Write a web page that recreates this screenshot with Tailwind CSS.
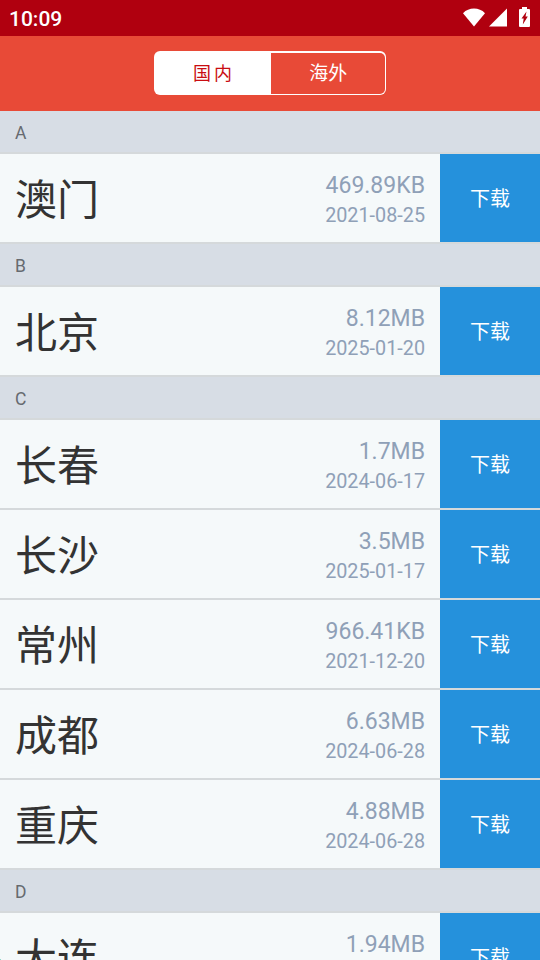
<!DOCTYPE html>
<html lang="zh-CN">
<head>
    <meta charset="UTF-8">
    <meta name="viewport" content="width=device-width, initial-scale=1.0">
    <title>城市下载</title>
    <script src="https://cdn.jsdelivr.net/npm/@tailwindcss/browser@4"></script>
</head>
<body class="relative h-screen overflow-hidden bg-[#f5f9fa] font-['Roboto','Noto_Sans_CJK_SC',sans-serif]">
    <!-- Status bar -->
    <div class="flex h-9 items-center justify-between bg-[#b0000f] pr-[10px] pl-[9px] text-white">
        <span class="pt-[3px] text-[21px] leading-none font-medium">10:09</span>
        <div class="flex items-center pb-[2px]">
            <svg class="h-[19px] w-[22px]" viewBox="0 0 22 19" fill="currentColor">
                <path d="M11 18.6 0 5.2C3 2.2 6.800 .6 11 .6s8 1.600 11 4.600z"/>
            </svg>
            <svg class="ml-1 h-[19px] w-[18px]" viewBox="0 0 18 19" fill="currentColor">
                <path d="M18 .6v18H0z"/>
            </svg>
            <svg class="ml-3 h-[20px] w-[11px]" viewBox="0 0 11 20">
                <path fill="currentColor" d="M3 0h5v2h2q1 0 1 1v16q0 1-1 1H1q-1 0-1-1V3q0-1 1-1h2z"/>
                <path fill="#b0000f" d="M7.500 4.500 2.500 11.500h2.200L3.800 17.500 8.800 9.500H6.500z"/>
            </svg>
        </div>
    </div>
    <!-- Header -->
    <header class="flex h-[75px] items-start justify-center bg-[#e84a37] pt-[15px]">
        <div class="flex h-11 w-[232px] overflow-hidden rounded-md bg-white text-[19px]">
            <button class="flex w-[117px] items-center justify-center pt-px pl-[3px] text-[18px] tracking-[3px] text-[#c90d12]">国内</button>
            <button class="my-[1.5px] mr-[1.5px] flex flex-1 items-center justify-center rounded-r-[5px] bg-[#e84a37] pt-[2px] pl-px text-white">海外</button>
        </div>
    </header>
    <!-- City list -->
    <main id="city-list"></main>
    <!-- Edge marker -->
    <div class="absolute bottom-0 left-0 size-px bg-[#8fd6cc]"></div>

    <script>
        const groups = [
            { letter: 'A', cities: [['澳门', '469.89KB', '2021-08-25']] },
            { letter: 'B', cities: [['北京', '8.12MB', '2025-01-20']] },
            { letter: 'C', cities: [
                ['长春', '1.7MB', '2024-06-17'],
                ['长沙', '3.5MB', '2025-01-17'],
                ['常州', '966.41KB', '2021-12-20'],
                ['成都', '6.63MB', '2024-06-28'],
                ['重庆', '4.88MB', '2024-06-28'],
            ] },
            { letter: 'D', cities: [['大连', '1.94MB', '']] },
        ];

        document.getElementById('city-list').innerHTML = groups.map(group => `
            <section>
                <h2 class="flex h-[43px] items-center border-b-2 border-[#d5d9db] bg-[#d7dde5] pt-[4px] pl-[15px] text-[17.5px] text-[#666a70]">${group.letter}</h2>
                ${group.cities.map(([name, size, date]) => `
                    <div class="flex h-[90px] border-b-2 border-[#d5d9db] bg-[#f5f9fa]">
                        <div class="flex flex-1 items-center pt-[5px] pl-[15px] text-[42px] leading-none text-[#333]">${name}</div>
                        <div class="flex flex-col items-end pt-[17px] pr-[15px] text-[#8fa0b7]">
                            <span class="h-[30px] text-[23px] leading-[30px]">${size}</span>
                            <span class="h-[30px] text-[19.8px] leading-[30px]">${date}</span>
                        </div>
                        <button class="flex w-[100px] items-center justify-center bg-[#2591dc] pt-[2px] text-[20px] leading-none text-white">下载</button>
                    </div>
                `).join('')}
            </section>
        `).join('');
    </script>
</body>
</html>
